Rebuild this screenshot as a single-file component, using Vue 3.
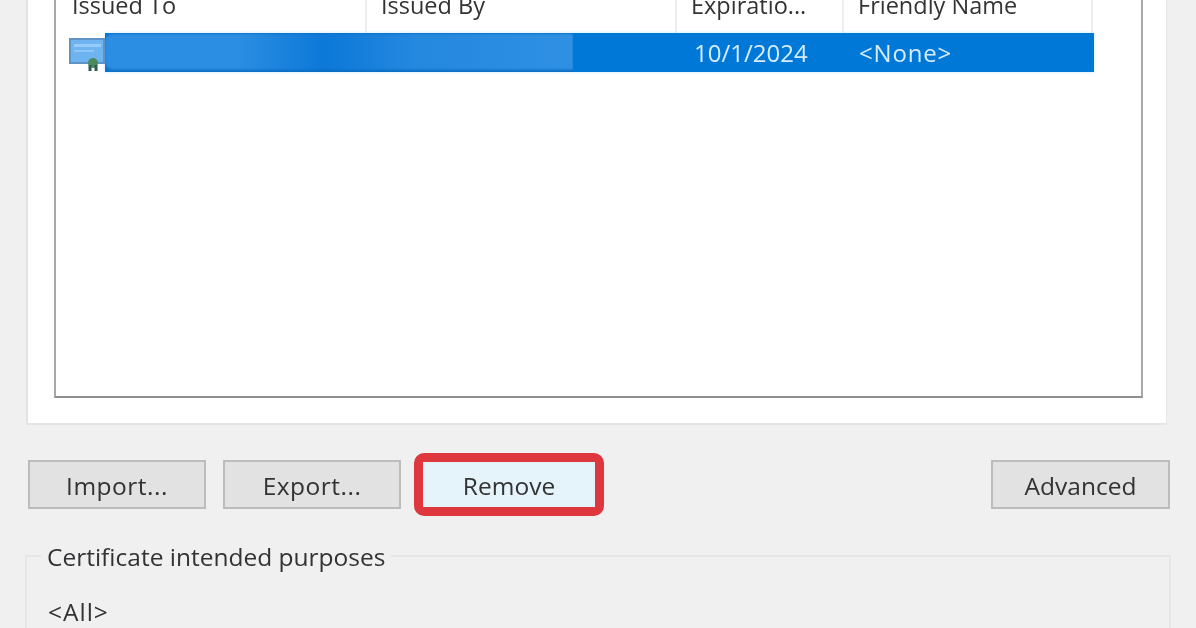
<script setup>
const columns = [
  { label: 'Issued To', width: 298 },
  { label: 'Issued By', width: 310 },
  { label: 'Expiratio...', width: 167 },
  { label: 'Friendly Name', width: 249 },
]
</script>

<template>
  <div class="page">
    <div class="panel">
      <div class="listbox">
        <div class="header">
          <div
            v-for="col in columns"
            :key="col.label"
            class="head-cell"
            :style="{ width: col.width + 'px' }"
          >{{ col.label }}</div>
        </div>
        <div class="row">
          <svg class="cert" viewBox="0 0 36 34" width="36" height="34">
            <rect x="1" y="1" width="34" height="24" fill="#6db4f0" stroke="#5f94c4" stroke-width="2" />
            <rect x="5" y="6" width="27" height="3" fill="#98ccf6" />
            <rect x="5" y="12" width="20" height="2" fill="#8fc6f3" />
            <circle cx="24" cy="25" r="5" fill="#4b8a5c" />
            <path d="M21 27 L21 33 M27 27 L27 33" stroke="#2f5c50" stroke-width="3" />
          </svg>
          <div class="cell-blank"></div>
          <div class="cell-date">10/1/2024</div>
          <div class="cell-name">&lt;None&gt;</div>
          <div class="redaction"></div>
        </div>
      </div>
    </div>

    <div class="actions">
      <button class="btn">Import...</button>
      <button class="btn">Export...</button>
      <span class="highlight"><button class="btn btn-hot">Remove</button></span>
      <button class="btn btn-advanced">Advanced</button>
    </div>

    <div class="group">
      <div class="legend">Certificate intended purposes</div>
      <div class="purpose">&lt;All&gt;</div>
    </div>
  </div>
</template>

<style scoped>
.page {
  width: 1196px;
  height: 628px;
  overflow: hidden;
  background: #f0f0f0;
  font-family: "Open Sans", "Noto Sans", sans-serif;
  color: #333336;
}
.panel {
  box-sizing: border-box;
  width: 1141px;
  height: 445px;
  margin: -20px 0 0 26px;
  padding: 0 23px 25px 26px;
  background: #ffffff;
  border-right: 1px solid #e6e6e6;
  border-bottom: 2px solid #e4e4e4;
  border-left: 2px solid #e2e2e2;
}
.listbox {
  box-sizing: border-box;
  height: 100%;
  padding-left: 13px;
  border-left: 2px solid #a8a8a8;
  border-right: 2px solid #a8a8a8;
  border-bottom: 2px solid #8f8f8f;
  filter: blur(0.7px);
}
.header {
  display: flex;
  height: 53px;
}
.head-cell {
  box-sizing: border-box;
  padding: 11px 0 0 3px;
  font-size: 23.5px;
  line-height: 28px;
  white-space: nowrap;
  border-right: 2px solid #eeeeee;
}
.head-cell + .head-cell {
  padding-left: 14px;
}
.row {
  position: relative;
  display: flex;
  align-items: center;
  width: 989px;
  height: 39px;
  margin-left: 36px;
  background: #0078d7;
  color: #d5edff;
  font-size: 24px;
  box-shadow: 0 0 3px #bfe8ff;
}
.cert {
  position: absolute;
  left: -36px;
  top: 5px;
}
.cell-blank {
  flex: none;
  width: 572px;
}
.cell-date {
  flex: none;
  box-sizing: border-box;
  width: 167px;
  padding-left: 17px;
}
.cell-name {
  padding-left: 15px;
  letter-spacing: 0.8px;
}
.redaction {
  position: absolute;
  left: 0;
  top: 0;
  width: 468px;
  height: 39px;
  border-radius: 8px 0 0 8px;
  background: linear-gradient(90deg, #2b8ee2 0%, #2b8ee2 28%, #0c78d8 47%, #2488df 66%, #2f90e3 100%);
  box-shadow: inset 0 -3px 3px -1px #0a6cc2, inset 0 2px 2px -1px #1272c8;
}
.actions {
  display: flex;
  align-items: center;
  height: 63px;
  margin-top: 28px;
  padding: 0 26px 0 28px;
}
.btn {
  box-sizing: border-box;
  width: 178px;
  height: 49px;
  padding: 2px 0 0;
  border: 2px solid #bcbcbc;
  background: #e2e2e2;
  font: inherit;
  font-size: 24.5px;
  letter-spacing: 0.5px;
  color: #333336;
  filter: blur(0.7px);
}
.actions > .btn + .btn {
  margin-left: 17px;
}
.highlight {
  display: block;
  margin-left: 13px;
  border: 9px solid #df373e;
  border-radius: 10px;
  filter: blur(0.4px);
}
.btn-hot {
  display: block;
  width: 172px;
  height: 45px;
  border: none;
  background: #e5f3fb;
  letter-spacing: 0;
  filter: blur(0.3px);
}
.actions > .btn-advanced {
  width: 179px;
  margin-left: auto;
  letter-spacing: 0;
}
.group {
  position: relative;
  box-sizing: border-box;
  width: 1146px;
  height: 90px;
  margin: 39px 0 0 25px;
  border: 2px solid #e6e6e6;
  border-bottom: none;
}
.legend {
  position: absolute;
  left: 14px;
  top: -16px;
  padding: 0 6px;
  background: #f0f0f0;
  font-size: 24.5px;
  line-height: 32px;
  filter: blur(0.7px);
}
.purpose {
  padding: 39px 0 0 21px;
  font-size: 24.5px;
  line-height: 32px;
  letter-spacing: 1px;
  filter: blur(0.7px);
}
</style>
